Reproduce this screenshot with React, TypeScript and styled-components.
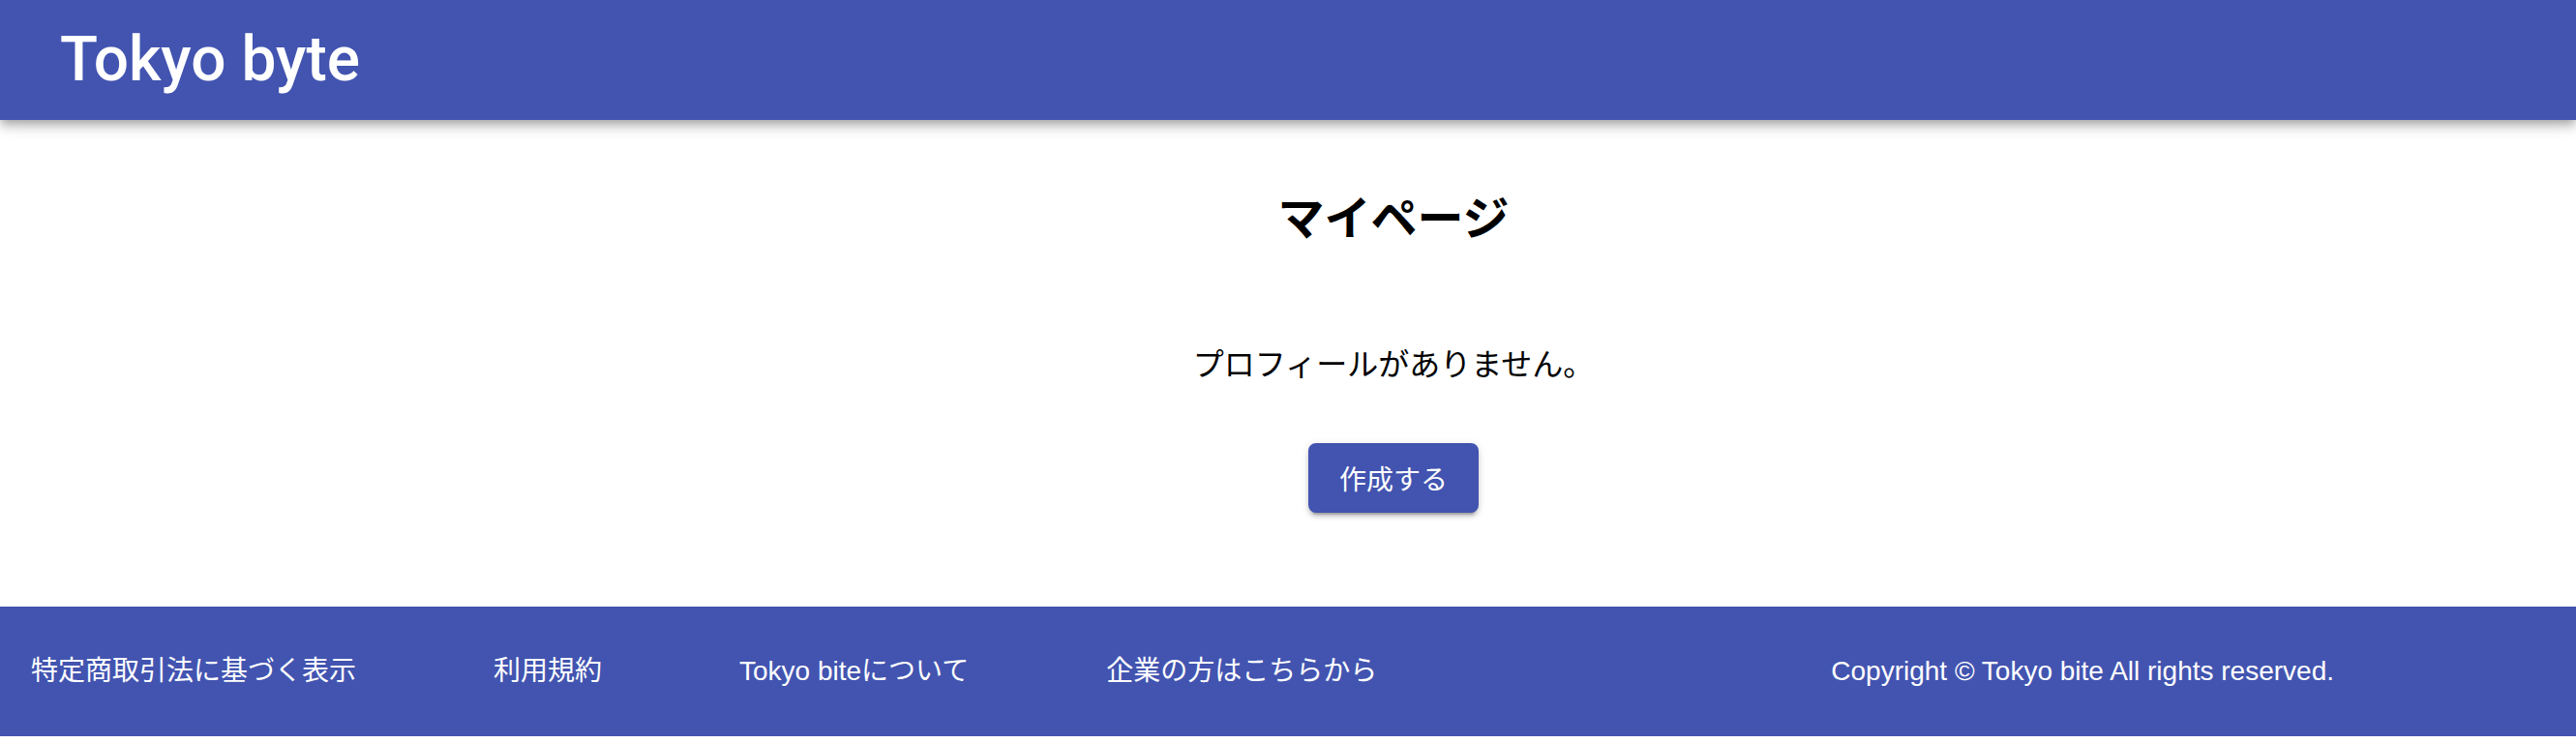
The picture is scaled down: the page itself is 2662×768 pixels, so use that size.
import React from "react";
import styled, { createGlobalStyle } from "styled-components";

const brand = "#4254b0";

const Global = createGlobalStyle`
  html, body {
    margin: 0;
    padding: 0;
    background: #ffffff;
  }
  body {
    font-family: "Liberation Sans", "Noto Sans CJK JP", sans-serif;
    color: #000;
  }
`;

const Page = styled.div`
  display: flex;
  flex-direction: column;
  width: 100%;
`;

const AppBar = styled.header`
  position: relative;
  z-index: 2;
  height: 124px;
  background: ${brand};
  display: flex;
  align-items: center;
  padding: 0 62px;
  box-sizing: border-box;
  box-shadow: 0 4px 8px -2px rgba(0, 0, 0, 0.2), 0 8px 10px 0 rgba(0, 0, 0, 0.14),
    0 2px 20px 0 rgba(0, 0, 0, 0.12);
`;

const Brand = styled.h1`
  margin: 0;
  font-family: Roboto, "Liberation Sans", sans-serif;
  font-weight: 500;
  font-size: 64px;
  line-height: 1;
  color: #ffffff;
  letter-spacing: 0;
`;

const Main = styled.main`
  display: flex;
  flex-direction: column;
  align-items: center;
  padding: 62px 0 97px 218px;
`;

const Title = styled.h2`
  margin: 0;
  font-family: "Noto Sans CJK JP", sans-serif;
  font-weight: 700;
  font-size: 48px;
  line-height: 72px;
`;

const Message = styled.p`
  margin: 92px 0 0;
  font-family: "Noto Sans CJK JP", sans-serif;
  font-weight: 400;
  font-size: 32px;
  line-height: 48px;
`;

const PrimaryButton = styled.button`
  margin-top: 60px;
  height: 72px;
  width: 176px;
  padding: 0 32px;
  border: none;
  border-radius: 8px;
  background: ${brand};
  color: #ffffff;
  font-family: "Noto Sans CJK JP", sans-serif;
  font-size: 28px;
  font-weight: 400;
  line-height: 1;
  cursor: pointer;
  box-shadow: 0 6px 2px -4px rgba(0, 0, 0, 0.2), 0 4px 4px 0 rgba(0, 0, 0, 0.14),
    0 2px 10px 0 rgba(0, 0, 0, 0.12);
`;

const Footer = styled.footer`
  height: 134px;
  background: ${brand};
  display: flex;
  align-items: center;
  padding: 0 250px 0 32px;
  box-sizing: border-box;
`;

const FooterLinks = styled.nav`
  display: flex;
  align-items: center;
  gap: 142px;
`;

const FooterLink = styled.a`
  color: #ffffff;
  text-decoration: none;
  font-family: "Liberation Sans", "Noto Sans CJK JP", sans-serif;
  font-size: 28px;
  line-height: 40px;
  white-space: nowrap;
`;

const Copyright = styled.span`
  margin-left: auto;
  color: #ffffff;
  font-family: "Liberation Sans", "Noto Sans CJK JP", sans-serif;
  font-size: 28px;
  line-height: 40px;
  white-space: nowrap;
`;

const links = ["特定商取引法に基づく表示", "利用規約", "Tokyo biteについて", "企業の方はこちらから"];

export default function App() {
  return (
    <Page>
      <Global />
      <AppBar>
        <Brand>Tokyo byte</Brand>
      </AppBar>
      <Main>
        <Title>マイページ</Title>
        <Message>プロフィールがありません。</Message>
        <PrimaryButton>作成する</PrimaryButton>
      </Main>
      <Footer>
        <FooterLinks>
          {links.map((l) => (
            <FooterLink key={l} href="#">
              {l}
            </FooterLink>
          ))}
        </FooterLinks>
        <Copyright>Copyright © Tokyo bite All rights reserved.</Copyright>
      </Footer>
    </Page>
  );
}
